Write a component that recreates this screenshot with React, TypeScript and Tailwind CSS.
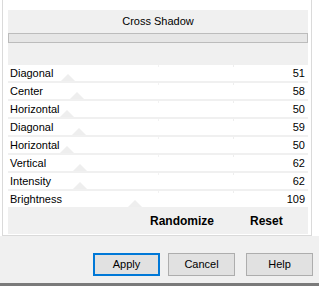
import React from "react";

const rows: { label: string; value: number; thumb: number }[] = [
  { label: "Diagonal", value: 51, thumb: 68 },
  { label: "Center", value: 58, thumb: 77 },
  { label: "Horizontal", value: 50, thumb: 67 },
  { label: "Diagonal", value: 59, thumb: 79 },
  { label: "Horizontal", value: 50, thumb: 67 },
  { label: "Vertical", value: 62, thumb: 80 },
  { label: "Intensity", value: 62, thumb: 80 },
  { label: "Brightness", value: 109, thumb: 135 },
];

function Row({ label, value, thumb }: { label: string; value: number; thumb: number }) {
  return (
    <div className="relative h-[16px] bg-white flex items-center justify-between pl-[2px] pr-[3px] text-[11px] leading-none text-black">
      <svg
        className="absolute bottom-0"
        style={{ left: thumb - 8 - 7 }}
        width="14"
        height="7"
        viewBox="0 0 14 7"
      >
        <polygon points="7,0 14,7 0,7" fill="#eeeeee" />
      </svg>
      <div className="absolute top-0 left-[150px] w-px h-[2px] bg-[#f2f2f2]" />
      <div className="absolute top-0 left-[225px] w-px h-[2px] bg-[#eeeeee]" />
      <span className="relative">{label}</span>
      <span className="relative">{value}</span>
    </div>
  );
}

function Btn({ children, primary }: { children: React.ReactNode; primary?: boolean }) {
  return (
    <div
      className={
        "h-[23px] w-[67px] flex items-center justify-center text-[11px] text-black bg-[#e1e1e1] " +
        (primary ? "border-2 border-[#0078d7]" : "border border-[#adadad]")
      }
    >
      {children}
    </div>
  );
}

export default function App() {
  return (
    <div
      className="w-[319px] h-[286px] bg-[#f0f0f0] flex flex-col overflow-hidden"
      style={{ fontFamily: '"Liberation Sans", Arial, sans-serif' }}
    >
      <div className="h-[236px] bg-white pl-[2px] pr-[7px]">
        <div className="h-full border-l border-r border-b border-[#dadada] pl-[5px] pr-[3px] pt-[10px] pb-[1px]">
          <div className="h-full bg-[#f0f0f0] flex flex-col">
            <div className="h-[23px] flex items-center justify-center text-[11px] text-black">
              Cross Shadow
            </div>
            <div className="h-[10px] bg-[#e6e6e6] border border-[#bcbcbc]" />
            <div className="h-[22px]" />
            <div className="flex flex-col gap-[2px]">
              {rows.map((r, i) => (
                <Row key={i} {...r} />
              ))}
            </div>
            <div className="flex-1 flex items-center text-[12px] font-bold text-black">
              <span className="ml-[142px]">Randomize</span>
              <span className="ml-[36px]">Reset</span>
            </div>
          </div>
        </div>
      </div>
      <div className="flex-1 flex items-start pt-[17px] pl-[93px] gap-[8px]">
        <Btn primary>Apply</Btn>
        <Btn>Cancel</Btn>
        <div className="ml-[3px]">
          <Btn>Help</Btn>
        </div>
      </div>
      <div className="h-[3px] bg-[#7a7a7a]" />
    </div>
  );
}
